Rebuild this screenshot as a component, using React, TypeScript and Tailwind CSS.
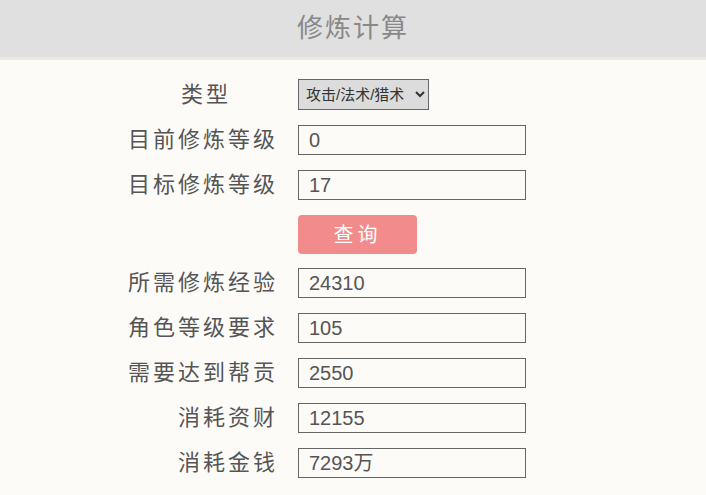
const font = { fontFamily: '"Liberation Sans", "Noto Sans CJK SC", sans-serif' }

const results = [
  { label: '所需修炼经验', value: '24310' },
  { label: '角色等级要求', value: '105' },
  { label: '需要达到帮贡', value: '2550' },
  { label: '消耗资财', value: '12155' },
  { label: '消耗金钱', value: '7293万' },
]

function Row({ label, children, className = 'h-[45px]' }: { label: string; children: React.ReactNode; className?: string }) {
  return (
    <div className={`flex items-center ${className}`}>
      <div className="w-[278px] text-right text-[22px] tracking-[3px] text-[#555]">{label}</div>
      <div className="ml-[20px] flex items-center">{children}</div>
    </div>
  )
}

function Field({ value }: { value: string }) {
  return (
    <input
      readOnly
      value={value}
      className="h-[30px] w-[228px] border border-[#666] bg-[#fdfbf8] px-[10px] text-[20px] text-[#555] outline-none"
      style={font}
    />
  )
}

export default function App() {
  return (
    <div className="h-[495px] w-[706px] overflow-hidden bg-[#fdfbf8]" style={font}>
      <header className="flex h-[57px] items-center justify-center bg-[#e0e0e0]">
        <h1 className="text-[26px] tracking-[2px] text-[#888]">修炼计算</h1>
      </header>
      <div className="h-[3px] bg-[#ebe8e1]" />

      <div className="pt-[11px]">
        <div className="flex h-[46px] items-center">
          <div className="w-[278px] pr-[47px] text-right text-[22px] tracking-[3px] text-[#555]">类型</div>
          <div className="ml-[20px]">
            <select
              className="h-[31px] w-[131px] border border-[#666] bg-[#dcdcdc] px-[3px] text-[15px] text-[#333]"
              style={font}
              defaultValue="a"
            >
              <option value="a">攻击/法术/猎术</option>
              <option value="b">防御/抗法</option>
            </select>
          </div>
        </div>
        <Row label="目前修炼等级"><Field value="0" /></Row>
        <Row label="目标修炼等级"><Field value="17" /></Row>
        <div className="flex h-[53px] items-center">
          <div className="w-[278px]" />
          <button className="ml-[20px] mt-[1px] h-[39px] w-[119px] rounded-[4px] bg-[#f28c8c] pt-[2px] text-[20px] tracking-[4px] text-white">
            查询
          </button>
        </div>
        {results.map((r) => (
          <Row key={r.label} label={r.label}><Field value={r.value} /></Row>
        ))}
      </div>
    </div>
  )
}
